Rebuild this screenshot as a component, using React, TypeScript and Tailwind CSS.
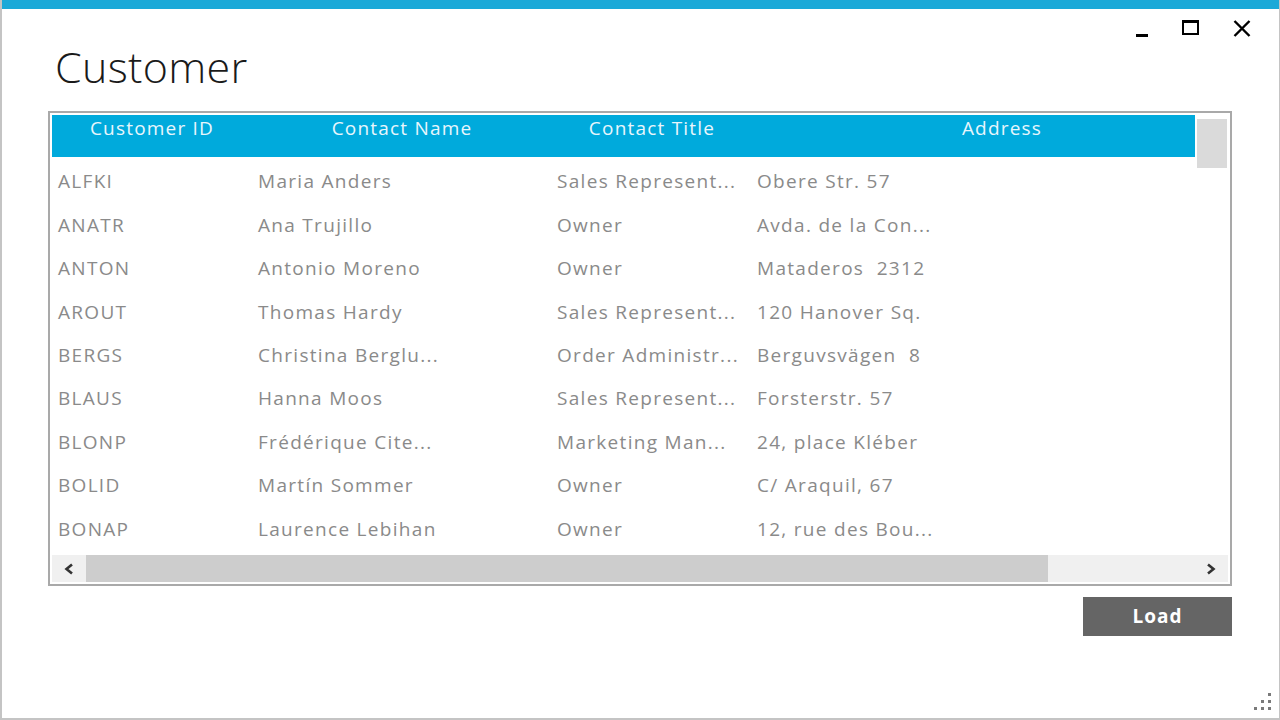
import React from "react";

const rows = [
  ["ALFKI", "Maria Anders", "Sales Represent...", "Obere Str. 57"],
  ["ANATR", "Ana Trujillo", "Owner", "Avda. de la Con..."],
  ["ANTON", "Antonio Moreno", "Owner", "Mataderos  2312"],
  ["AROUT", "Thomas Hardy", "Sales Represent...", "120 Hanover Sq."],
  ["BERGS", "Christina Berglu...", "Order Administr...", "Berguvsvägen  8"],
  ["BLAUS", "Hanna Moos", "Sales Represent...", "Forsterstr. 57"],
  ["BLONP", "Frédérique Cite...", "Marketing Man...", "24, place Kléber"],
  ["BOLID", "Martín Sommer", "Owner", "C/ Araquil, 67"],
  ["BONAP", "Laurence Lebihan", "Owner", "12, rue des Bou..."],
];

export default function App() {
  return (
    <div
      className="w-[1280px] h-[720px] bg-white relative overflow-hidden border-l-2 border-b-2 border-r border-[#c4c4c4] flex flex-col"
      style={{ fontFamily: '"Open Sans", "Noto Sans", sans-serif' }}
    >
      <div className="h-[9px] bg-[#1ba9d8] shrink-0" />
      <div className="flex justify-end items-start h-[30px] pr-[22px] pt-[12px]">
        <div className="w-[50px] h-[20px] flex items-end justify-center">
          <div className="w-[12px] h-[3px] bg-black mb-[4px] mr-[1px]" />
        </div>
        <div className="w-[50px] h-[20px] flex items-start justify-center">
          <div className="w-[17px] h-[15px] border-2 border-t-[3px] border-black -ml-[4px] -mt-[1px]" />
        </div>
        <div className="w-[40px] h-[20px] flex items-start justify-center">
          <svg width="18" height="17" viewBox="0 0 18 17" className="ml-[10px] -mt-[1px]">
            <path d="M1.5 1 L16.5 16 M16.5 1 L1.5 16" stroke="black" strokeWidth="2.4" />
          </svg>
        </div>
      </div>
      <div className="pl-[53px] h-[72px] -mt-[8px]">
        <h1 className="text-[43px] leading-[72px] text-[#1a1a1a] font-light tracking-[0.3px]">
          Customer
        </h1>
      </div>
      <div className="ml-[46px] mt-[8px] w-[1184px] h-[475px] border-2 border-[#a9a9a9] p-[2px] flex flex-col">
        <div className="flex flex-1 min-h-0">
          <div className="flex-1 min-w-0 overflow-hidden flex flex-col">
            <div className="h-[42px] bg-[#00aadc] flex text-[#e8f6fc] text-[19px] tracking-[1.2px] shrink-0 w-[1143px] overflow-hidden">
              <div className="w-[200px] shrink-0 text-center leading-[27px]">Customer ID</div>
              <div className="w-[300px] shrink-0 text-center leading-[27px]">Contact Name</div>
              <div className="w-[200px] shrink-0 text-center leading-[27px]">Contact Title</div>
              <div className="w-[500px] shrink-0 text-center leading-[27px]">Address</div>
            </div>
            <div className="flex flex-col pt-[3px]">
              {rows.map((r) => (
                <div key={r[0]} className="h-[43.4px] flex items-center text-[19px] text-[#8a8a8a] tracking-[1.3px]">
                  <div className="w-[200px] shrink-0 pl-[6px] whitespace-pre">{r[0]}</div>
                  <div className="w-[300px] shrink-0 pl-[6px] whitespace-pre">{r[1]}</div>
                  <div className="w-[200px] shrink-0 pl-[5px] whitespace-pre">{r[2]}</div>
                  <div className="w-[500px] shrink-0 pl-[5px] whitespace-pre">{r[3]}</div>
                </div>
              ))}
            </div>
          </div>
          <div className="w-[33px] shrink-0 flex justify-center pt-[4px]">
            <div className="w-[30px] h-[49px] bg-[#dadada]" />
          </div>
        </div>
        <div className="h-[27px] bg-[#f0f0f0] flex items-center shrink-0">
          <div className="w-[34px] h-full flex items-center justify-center">
            <svg width="12" height="12" viewBox="0 0 12 12">
              <path d="M9 1.5 L3.5 6 L9 10.5" stroke="#333" strokeWidth="2.6" fill="none" />
            </svg>
          </div>
          <div className="w-[962px] h-full bg-[#cdcdcd]" />
          <div className="flex-1" />
          <div className="w-[34px] h-full flex items-center justify-center">
            <svg width="12" height="12" viewBox="0 0 12 12">
              <path d="M3 1.5 L8.5 6 L3 10.5" stroke="#333" strokeWidth="2.6" fill="none" />
            </svg>
          </div>
        </div>
      </div>
      <div className="flex justify-end pr-[47px] pt-[11px]">
        <button className="w-[149px] h-[39px] bg-[#656565] text-white text-[19px] font-bold tracking-[1px]">
          Load
        </button>
      </div>
      <div className="absolute right-[7px] bottom-[6px] w-[21px] h-[21px]">
        <svg width="21" height="21" viewBox="0 0 21 21">
          <rect x="17" y="2" width="3" height="3" fill="#7a7a7a" />
          <rect x="10" y="9" width="3" height="3" fill="#7a7a7a" />
          <rect x="17" y="9" width="3" height="3" fill="#7a7a7a" />
          <rect x="3" y="16" width="3" height="3" fill="#7a7a7a" />
          <rect x="10" y="16" width="3" height="3" fill="#7a7a7a" />
          <rect x="17" y="16" width="3" height="3" fill="#7a7a7a" />
        </svg>
      </div>
    </div>
  );
}
